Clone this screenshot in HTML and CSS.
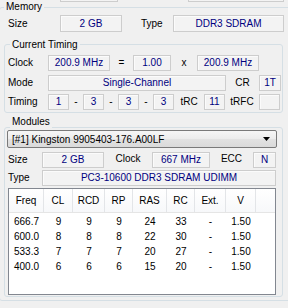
FILE: index.html
```html
<!DOCTYPE html>
<html lang="en">
<head>
    <meta charset="UTF-8">
    <title>Memory</title>
    <link rel="stylesheet" href="styles.css">
</head>
<body>

    <div class="stub">
        <span class="stub-box stub-a"></span>
        <span class="stub-box stub-b"></span>
    </div>

    <section class="group group-memory">
        <div class="group-title title-memory">Memory</div>

        <div class="row row-mem">
            <span class="lbl">Size</span>
            <span class="val">2 GB</span>
            <span class="lbl lbl-type">Type</span>
            <span class="val">DDR3 SDRAM</span>
        </div>

        <section class="group group-inner group-timing">
            <div class="group-title title-timing">Current Timing</div>

            <div class="row row-clock">
                <span class="lbl">Clock</span>
                <span class="val">200.9 MHz</span>
                <span class="sym">=</span>
                <span class="val">1.00</span>
                <span class="sym">x</span>
                <span class="val">200.9 MHz</span>
            </div>

            <div class="row row-mode">
                <span class="lbl">Mode</span>
                <span class="val">Single-Channel</span>
                <span class="sym">CR</span>
                <span class="val">1T</span>
            </div>

            <div class="row row-timing">
                <span class="lbl">Timing</span>
                <span class="val">1</span>
                <span class="sym">-</span>
                <span class="val">3</span>
                <span class="sym">-</span>
                <span class="val">3</span>
                <span class="sym">-</span>
                <span class="val">3</span>
                <span class="sym">tRC</span>
                <span class="val">11</span>
                <span class="sym">tRFC</span>
                <span class="val"></span>
            </div>
        </section>

        <section class="group group-inner group-modules">
            <div class="group-title title-modules">Modules</div>

            <div class="dropdown">
                <span>[#1] Kingston 9905403-176.A00LF</span>
                <svg class="dropdown-arrow" width="7" height="4" viewBox="0 0 7 4"><path d="M0 0h7L3.5 4z" fill="#000"/></svg>
            </div>

            <div class="row row-msize">
                <span class="lbl">Size</span>
                <span class="val">2 GB</span>
                <span class="sym sym-up">Clock</span>
                <span class="val">667 MHz</span>
                <span class="sym sym-up">ECC</span>
                <span class="val">N</span>
            </div>

            <div class="row row-mtype">
                <span class="lbl">Type</span>
                <span class="val">PC3-10600 DDR3 SDRAM UDIMM</span>
            </div>

            <div class="listview">
                <div class="lv-head">
                    <span>Freq</span><span>CL</span><span>RCD</span><span>RP</span><span>RAS</span><span>RC</span><span>Ext.</span><span>V</span><span></span>
                </div>
                <div class="lv-body">
                    <div class="lv-row"><span>666.7</span><span>9</span><span>9</span><span>9</span><span>24</span><span>33</span><span>-</span><span>1.50</span></div>
                    <div class="lv-row"><span>600.0</span><span>8</span><span>8</span><span>8</span><span>22</span><span>30</span><span>-</span><span>1.50</span></div>
                    <div class="lv-row"><span>533.3</span><span>7</span><span>7</span><span>7</span><span>20</span><span>27</span><span>-</span><span>1.50</span></div>
                    <div class="lv-row"><span>400.0</span><span>6</span><span>6</span><span>6</span><span>15</span><span>20</span><span>-</span><span>1.50</span></div>
                </div>
            </div>
        </section>
    </section>

</body>
</html>
```

FILE: styles.css
```css
:root {
    --c-bg: #f0f0f0;
    --c-group: #d5dfe5;
    --c-field-border: #cdcdcd;
    --c-field-bg: #f3f3f3;
    --c-value: #000080;
    --c-text: #000;
}
* {
    box-sizing: border-box;
}
body {
    margin: 0;
    width: 288px;
    height: 308px;
    overflow: hidden;
    background: var(--c-bg);
    color: var(--c-text);
    font-family: "Liberation Sans", Arial, sans-serif;
    font-size: 10px;
}

/* bottoms of the fields from the block above */
.stub {
    display: flex;
    height: 2px;
}
.stub-box {
    height: 2px;
    border: 1px solid var(--c-field-border);
    border-top: none;
    background: var(--c-field-bg);
}
.stub-a {
    margin-left: 60px;
    width: 58px;
}
.stub-b {
    margin-left: 70px;
    width: 96px;
}

/* group boxes */
.group {
    border: 1px solid var(--c-group);
    border-radius: 3px;
}
.group-title {
    width: fit-content;
    height: 12px;
    line-height: 12px;
    padding: 0 2px;
    background: var(--c-bg);
    white-space: nowrap;
}
.group-memory {
    margin: 5px -3px 0 -1px;
    padding-bottom: 3px;
}
.title-memory {
    margin: -7px 0 0 4px;
}
.group-inner {
    margin: 12px 7px 0 4px;
}
.group-timing {
    padding-bottom: 2px;
}
.title-timing {
    margin: -6px 0 0 5px;
}
.group-modules {
    margin-top: 14px;
    padding-bottom: 1px;
}
.title-modules {
    margin: -12px 0 0 5px;
}

/* label / value rows */
.row {
    display: grid;
    align-items: center;
    height: 16px;
}
.lbl {
    line-height: 16px;
    white-space: nowrap;
}
.sym {
    text-align: center;
    line-height: 16px;
    white-space: nowrap;
}
.sym-up {
    margin-top: -2px;
}
.val {
    height: 100%;
    border: 1px solid var(--c-field-border);
    background: var(--c-field-bg);
    box-shadow: inset 1px 1px 0 #fbfbfb;
    color: var(--c-value);
    text-align: center;
    line-height: 14px;
    white-space: nowrap;
    overflow: hidden;
}
.row-mem {
    margin-top: 2px;
    height: 17px;
    padding-left: 8px;
    grid-template-columns: 52px 62px 51px 111px;
}
.row-mem .val {
    line-height: 15px;
}
.lbl-type {
    padding-left: 19px;
}
.row-clock {
    margin-top: 4px;
    padding-left: 3px;
    grid-template-columns: 40px 62px 23px 38px 26px 62px;
}
.row-mode {
    margin-top: 4px;
    padding-left: 3px;
    grid-template-columns: 40px 178px 33px 22px;
}
.row-timing {
    margin-top: 3px;
    padding-left: 3px;
    grid-template-columns: 40px 21px 14px 21px 14px 21px 14px 21px 30px 21px 34px 21px;
}
.row-msize {
    margin-top: 4px;
    padding-left: 3px;
    grid-template-columns: 34px 62px 48px 58px 43px 23px;
}
.row-mtype {
    margin-top: 2px;
    padding-left: 3px;
    grid-template-columns: 34px 234px;
}

/* module selector */
.dropdown {
    display: flex;
    justify-content: space-between;
    align-items: center;
    width: 270px;
    height: 18px;
    margin: 2px 0 0 2px;
    padding: 0 6px 0 4px;
    border: 1px solid #7a7a7a;
    border-radius: 2px;
    background: linear-gradient(#f6f6f6, #ececec 50%, #e2e2e2 51%, #dadada);
    white-space: nowrap;
}

/* SPD table */
.listview {
    width: 268px;
    height: 107px;
    margin: 2px 0 0 3px;
    border: 1px solid #828790;
    background: #fff;
}
.lv-head,
.lv-row {
    display: grid;
    grid-template-columns: 35px 29px 32px 28px 34px 28px 31px 30px 1fr;
}
.lv-head {
    height: 24px;
    border-bottom: 1px solid #e5e5e5;
    background: linear-gradient(#fff, #f7f8fa);
}
.lv-head span {
    border-right: 1px solid #e3e5e8;
    text-align: center;
    line-height: 23px;
}
.lv-head span:last-child {
    border-right: none;
}
.lv-body {
    padding-top: 1px;
}
.lv-row {
    height: 15px;
    line-height: 15px;
}
.lv-row span {
    text-align: center;
}
```
